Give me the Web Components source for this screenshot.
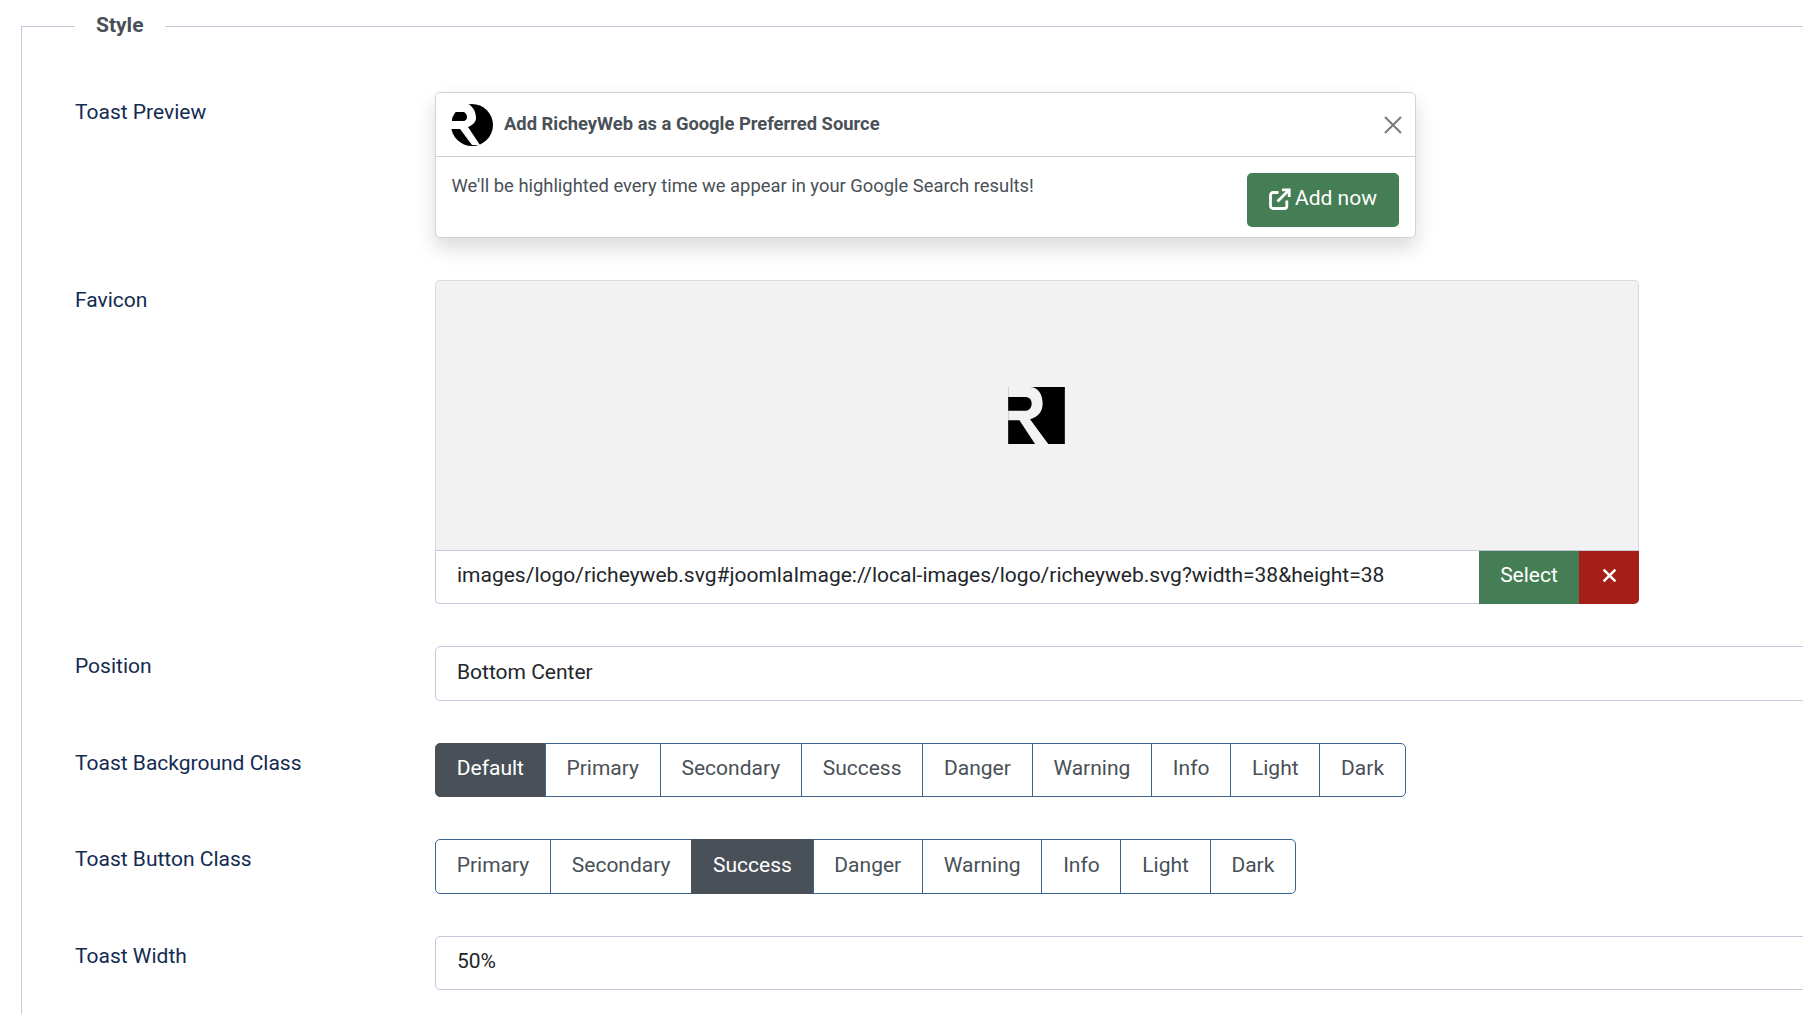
<!DOCTYPE html>
<html lang="en">
<head>
<meta charset="UTF-8">
<title>Style</title>
<style>
  html, body { margin: 0; padding: 0; height: 100%; overflow: hidden; background: #fff; }
  body { font: 21px/1.5 Roboto, sans-serif; color: #22262a; }
</style>
</head>
<body>
<form-set legend="Style">
  <form-row label="Toast Preview">
    <toast-preview heading="Add RicheyWeb as a Google Preferred Source" action="Add now">We'll be highlighted every time we appear in your Google Search results!</toast-preview>
  </form-row>
  <form-row label="Favicon">
    <media-field value="images/logo/richeyweb.svg#joomlaImage://local-images/logo/richeyweb.svg?width=38&amp;height=38"></media-field>
  </form-row>
  <form-row label="Position"><text-control>Bottom Center</text-control></form-row>
  <form-row label="Toast Background Class">
    <btn-group active="Default" options="Default,Primary,Secondary,Success,Danger,Warning,Info,Light,Dark"></btn-group>
  </form-row>
  <form-row label="Toast Button Class">
    <btn-group active="Success" options="Primary,Secondary,Success,Danger,Warning,Info,Light,Dark"></btn-group>
  </form-row>
  <form-row label="Toast Width"><text-control>50%</text-control></form-row>
</form-set>

<script>
  // the R mark, square version (favicon preview) and round version (toast header)
  const LOGO_SQUARE = `<svg viewBox="0 0 171 172" width="57" height="57" aria-hidden="true">
    <rect width="171" height="172" fill="#000"/>
    <path fill="#f2f2f2" fill-rule="evenodd" d="M0 0H66C90 0 104 22 104 50C104 75 90 91 66 97L121 172H81L34 100H0V72H50C64 72 71 62 71 50C71 38 64 30 50 30H0Z"/>
  </svg>`;
  const LOGO_ROUND = `<svg viewBox="0 0 42 42" width="42" height="42" aria-hidden="true">
    <circle cx="21" cy="21" r="21" fill="#000"/>
    <path fill="#fff" fill-rule="evenodd" d="M0 0H17C23 3 25 9 25 14C25 18 22 21 17 23L29 41H21L9 25H0ZM5 8C3 8 1 10 1 13C1 15 1 17 1 17H12C15 17 16 15 16 13C16 10 14 8 12 8Z"/>
  </svg>`;

  class FormSet extends HTMLElement {
    constructor() {
      super();
      this.attachShadow({mode: "open"}).innerHTML = `
        <style>
          :host { display: block; padding-top: 10px; }
          fieldset {
            width: 2200px; min-height: 1200px; box-sizing: border-box; margin: 0 0 0 21px;
            border: 1px solid #c3c8da; padding: 48.5px 0 0 53px;
          }
          legend { padding: 0 21px 2px; font: 700 21px/31.5px Roboto, sans-serif; color: #495057; }
        </style>
        <fieldset><legend>${this.getAttribute('legend')}</legend><slot></slot></fieldset>`;
    }
  }
  customElements.define('form-set', FormSet);

  class FormRow extends HTMLElement {
    constructor() {
      super();
      this.attachShadow({mode: "open"}).innerHTML = `
        <style>
          :host { display: flex; margin-bottom: 42px; }
          label { flex: 0 0 360px; padding-top: 5px; font: 21px/31.5px Roboto, sans-serif; color: #132b50; }
          div { flex: 0 0 1700px; }
        </style>
        <label>${this.getAttribute('label')}</label><div><slot></slot></div>`;
    }
  }
  customElements.define('form-row', FormRow);

  class ToastPreview extends HTMLElement {
    constructor() {
      super();
      this.attachShadow({mode: "open"}).innerHTML = `
        <style>
          :host {
            display: block; width: 981px; box-sizing: border-box; background: #fff; color: #495057;
            border: 1px solid #d3d3d3; border-radius: 5px; box-shadow: 0 10px 20px rgba(0,0,0,.15);
          }
          header { display: flex; align-items: center; gap: 11px; height: 63px; padding: 0 13px 0 15px; border-bottom: 1px solid #d0d0d0; }
          header svg { display: block; }
          strong { flex: 1; padding-bottom: 2px; font: 700 18.37px/28px Roboto, sans-serif; }
          .body { display: flex; justify-content: space-between; padding: 16px 16px 10px 15.5px; }
          p { margin: -1px 0 0; font: 18.37px/28px Roboto, sans-serif; }
          button {
            display: flex; align-items: center; gap: 4px; height: 54px; width: 152px; justify-content: center;
            border: 0; border-radius: 5px; background: #457d54; color: #fff; font: 21px/31.5px Roboto, sans-serif; padding: 0 0 2px;
          }
          button svg { margin-top: -1px; }
        </style>
        <header>
          ${LOGO_ROUND}
          <strong>${this.getAttribute('heading')}</strong>
          <svg viewBox="0 0 18 18" width="18" height="18" aria-hidden="true"><path d="M1 1L17 17M17 1L1 17" stroke="#7a7a7a" stroke-width="2" fill="none"/></svg>
        </header>
        <div class="body">
          <p><slot></slot></p>
          <button>
            <svg viewBox="0 0 22 22" width="22" height="22" aria-hidden="true" fill="none" stroke="#fff" stroke-width="2.8">
              <path d="M17.800 12.500V18a2.500 2.500 0 0 1-2.500 2.500H4A2.500 2.500 0 0 1 1.500 18V7A2.500 2.500 0 0 1 4 4.500H9.500"/>
              <path d="M8.500 13.500L19.500 2.500M13 1.800H20.200V9"/>
            </svg>
            ${this.getAttribute('action')}
          </button>
        </div>`;
    }
  }
  customElements.define('toast-preview', ToastPreview);

  class MediaField extends HTMLElement {
    constructor() {
      super();
      this.attachShadow({mode: "open"}).innerHTML = `
        <style>
          :host { display: block; width: 1204px; }
          .preview {
            display: flex; align-items: center; justify-content: center; height: 271px; box-sizing: border-box;
            background: #f2f2f2; border: 1px solid #d8dae2; border-bottom-color: #c3c8da; border-radius: 5px 5px 0 0;
          }
          .preview svg { display: block; margin: 0 2px 0 0; }
          .bar { display: flex; height: 53px; }
          .value {
            flex: 1; box-sizing: border-box; padding: 8.5px 20px 0 21px; color: #22262a; font: 21px/31.5px Roboto, sans-serif;
            border: 1px solid #c3c8da; border-top: 0; border-right: 0; border-radius: 0 0 0 5px; white-space: nowrap; overflow: hidden;
          }
          .select, .clear { display: flex; align-items: center; justify-content: center; box-sizing: border-box; padding-bottom: 4px; color: #fff; font: 21px/31.5px Roboto, sans-serif; }
          .select { width: 100px; background: #457d54; }
          .clear { width: 60px; background: #a51f18; border-radius: 0 0 5px 0; }
        </style>
        <div class="preview">${LOGO_SQUARE}</div>
        <div class="bar">
          <div class="value"></div>
          <div class="select">Select</div>
          <div class="clear"><svg viewBox="0 0 14 14" width="15" height="15" aria-hidden="true"><path d="M1.500 1.500L12.500 12.500M12.500 1.500L1.500 12.500" stroke="#fff" stroke-width="2.400" fill="none"/></svg></div>
        </div>`;
      this.shadowRoot.querySelector('.value').textContent = this.getAttribute('value');
    }
  }
  customElements.define('media-field', MediaField);

  class TextControl extends HTMLElement {
    constructor() {
      super();
      this.attachShadow({mode: "open"}).innerHTML = `
        <style>
          :host {
            display: block; box-sizing: border-box; height: 54.5px; padding: 9.5px 21px 11.5px; color: #22262a;
            font: 21px/31.5px Roboto, sans-serif; border: 1px solid #c3c8da; border-radius: 5px;
          }
        </style><slot></slot>`;
    }
  }
  customElements.define('text-control', TextControl);

  class BtnGroup extends HTMLElement {
    constructor() {
      super();
      const active = this.getAttribute('active');
      const items = this.getAttribute('options').split(',').map(o =>
        `<span class="${o === active ? 'on' : ''}">${o}</span>`).join('');
      this.attachShadow({mode: "open"}).innerHTML = `
        <style>
          :host { display: flex; }
          span {
            box-sizing: border-box; height: 54.5px; padding: 9.5px 20.75px 11.5px; margin-left: -1px; color: #495057;
            font: 21px/31.5px Roboto, sans-serif; border: 1px solid #3b6590; background: #fff;
          }
          span:first-of-type { margin-left: 0; border-radius: 5px 0 0 5px; }
          span:last-of-type { border-radius: 0 5px 5px 0; }
          span.on { background: #495057; border-color: #495057; color: #fff; }
        </style>${items}`;
    }
  }
  customElements.define('btn-group', BtnGroup);
</script>
</body>
</html>
